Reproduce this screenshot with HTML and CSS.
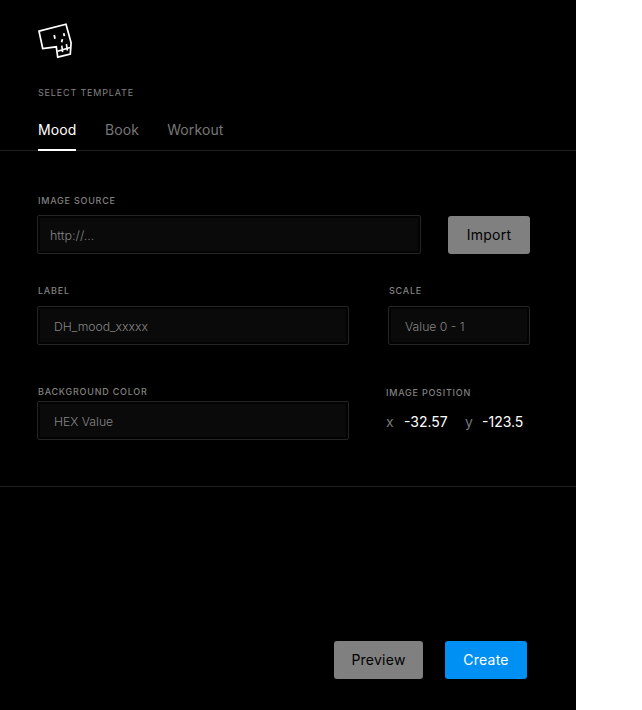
FILE: index.html
```
<!DOCTYPE html>
<html lang="en">
<head>
<meta charset="utf-8">
<title>Select template</title>
<link rel="stylesheet" href="styles.css">
</head>
<body>
<main class="panel">
  <header class="header">
    <svg class="logo" viewBox="0 0 60 50" fill="none" stroke="#fff" stroke-width="1.7">
      <path d="M9 16.1 36 9.3 41.1 27.9 40.3 39.1 27.7 42.1 26.3 31.8 12.7 33.5Z"/>
      <path d="M27.5 36.2 40.3 32.6M31.8 30.7l.8 6.4M36.4 29.2l1 6.4" stroke-width="1.6"/>
      <path d="M24.2 20l.8 3.8M33.7 18.3l.7 2.8M31.6 27.3l.8-3.2" stroke-width="1.8"/>
    </svg>
    <h1 class="label select-label">SELECT TEMPLATE</h1>
    <nav class="tabs">
      <a class="tab active">Mood</a>
      <a class="tab book">Book</a>
      <a class="tab">Workout</a>
    </nav>
  </header>
  <form class="form">
    <div class="row source-row">
      <div class="field source">
        <label class="label">IMAGE SOURCE</label>
        <input class="input" type="text" placeholder="http://...">
      </div>
      <button class="button import" type="button">Import</button>
    </div>
    <div class="row label-row">
      <div class="field wide">
        <label class="label">LABEL</label>
        <input class="input" type="text" placeholder="DH_mood_xxxxx">
      </div>
      <div class="field scale">
        <label class="label">SCALE</label>
        <input class="input" type="text" placeholder="Value 0 - 1">
      </div>
    </div>
    <div class="row color-row">
      <div class="field wide color">
        <label class="label">BACKGROUND COLOR</label>
        <input class="input" type="text" placeholder="HEX Value">
      </div>
      <div class="position">
        <div class="label">IMAGE POSITION</div>
        <div class="coords">
          <span class="axis axis-x">x</span><span class="value value-x">-32.57</span>
          <span class="axis axis-y">y</span><span class="value">-123.5</span>
        </div>
      </div>
    </div>
  </form>
  <footer class="footer">
    <button class="button preview" type="button">Preview</button>
    <button class="button create" type="button">Create</button>
  </footer>
</main>
</body>
</html>
```
FILE: styles.css
```
* { box-sizing: border-box; }
body {
  margin: 0;
  background: #fff;
  font-family: Inter, "Liberation Sans", sans-serif;
  overflow: hidden;
}
.panel {
  width: 576px;
  height: 710px;
  background: #000;
  display: flex;
  flex-direction: column;
}
.header {
  height: 151px;
  padding: 15px 38px 0;
  border-bottom: 1px solid #202020;
}
.logo { display: block; width: 60px; height: 50px; margin-left: -8px; }
.label {
  display: block;
  margin: 0;
  font-size: 9px;
  line-height: 12px;
  font-weight: 500;
  letter-spacing: 0.77px;
  color: #808080;
  white-space: nowrap;
}
.select-label { margin-top: 22px; font-weight: 400; letter-spacing: 0.83px; }
.tabs { display: flex; margin-top: 18px; height: 34px; }
.tab {
  height: 34px;
  margin-right: 29px;
  font-size: 14px;
  line-height: 25px;
  letter-spacing: 0.12px;
  color: #777;
}
.tab.book { margin-right: 28px; }
.tab.active { color: #fff; border-bottom: 2px solid #fff; width: 38px; }
.form {
  height: 336px;
  padding: 44px 46px 0 37px;
  border-bottom: 1px solid #202020;
}
.row { display: flex; justify-content: space-between; }
.source-row { align-items: flex-end; }
.field .label { margin: 0 0 9px 1px; }
.source { width: 384px; }
.wide { width: 312px; }
.scale { width: 142px; }
.input {
  display: block;
  width: 100%;
  height: 39px;
  padding: 1px 15px 0 16px;
  border: 1px solid #242424;
  border-radius: 2px;
  background: #0a0a0a;
  box-shadow: inset 0 0 0 2px #030303;
  color: #fff;
  font: 300 12.2px Inter, "Liberation Sans", sans-serif;
  outline: none;
}
.source .input { padding-left: 12px; font-size: 12.5px; }
.input::placeholder { color: #858585; opacity: 1; }
.button {
  height: 38px;
  padding: 0 0 2px;
  border: 0;
  border-radius: 3px;
  background: #808080;
  color: #000;
  font: 400 14px Inter, "Liberation Sans", sans-serif;
  letter-spacing: 0.25px;
}
.source .label { margin-bottom: 8px; }
.import { width: 82px; }
.label-row { margin-top: 31px; }
.color-row { margin-top: 41px; }
.color .label { margin-bottom: 3px; }
.position { width: 144px; padding-top: 1px; }
.coords { display: flex; margin-top: 12px; font-size: 14px; line-height: 21px; }
.axis { color: #777; }
.axis-x { width: 18px; }
.value-x { width: 61px; }
.axis-y { width: 17px; }
.value { color: #fff; white-space: nowrap; }
.footer {
  display: flex;
  justify-content: flex-end;
  gap: 22px;
  padding: 154px 49px 0 0;
}
.preview { width: 89px; }
.create { width: 82px; background: #0090f3; color: #fff; }
```
